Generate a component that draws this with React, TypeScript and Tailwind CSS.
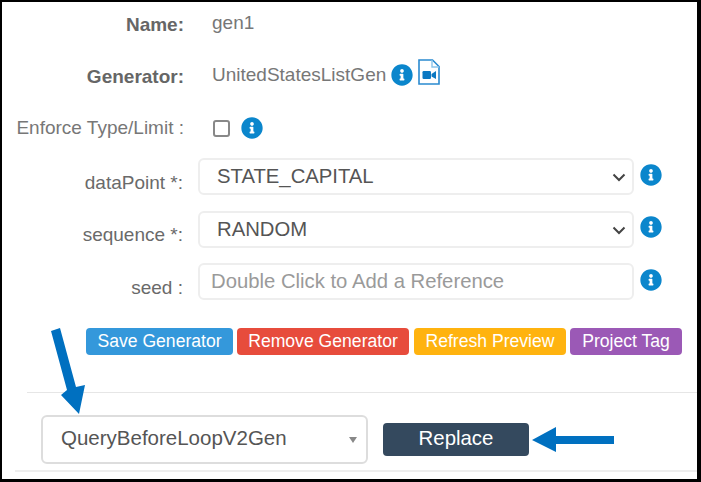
import { FaInfoCircle } from "react-icons/fa";

function Info({ className = "" }: { className?: string }) {
  return <FaInfoCircle className={"text-[#0b86cc] text-[22px] shrink-0 " + className} />;
}

function Chevron() {
  return (
    <svg width="14" height="9" viewBox="0 0 14 9" className="absolute right-[6px] top-[13px]">
      <path d="M1.5 1.5 L7 7 L12.5 1.5" fill="none" stroke="#444" strokeWidth="2" />
    </svg>
  );
}

function FileVideo() {
  return (
    <svg width="22" height="26" viewBox="0 0 22 26" className="ml-[5px] -mt-[8px] shrink-0">
      <path d="M1 1 H14.5 L21 7.5 V25 H1 Z" fill="#fff" stroke="#2a8ad0" strokeWidth="1.6" />
      <path d="M14 1 V8 H21" fill="none" stroke="#8cc4ea" strokeWidth="1.4" />
      <rect x="4.5" y="12" width="8.5" height="8" rx="1.2" fill="#0b78c2" />
      <path d="M13.5 15 L18 12 V20 L13.5 17.5 Z" fill="#0b78c2" />
    </svg>
  );
}

function SelectRow({ label, value, placeholder }: { label: string; value: string; placeholder?: boolean }) {
  return (
    <div className="flex items-center h-[37px]">
      <div className="w-[181px] text-right text-[#6a6a6a] text-[19px] leading-none pt-[11px] shrink-0">{label}</div>
      <div
        className={
          "relative ml-[15px] w-[436px] h-[37px] border-2 border-[#eeeeee] rounded-[6px] bg-white flex items-center text-[20.3px] " +
          (placeholder ? "pl-[11px]" : "pl-[17px]")
        }
      >
        <span className={placeholder ? "text-[#9a9a9a]" : "text-[#555]"}>{value}</span>
        {!placeholder && <Chevron />}
      </div>
      <Info className="ml-[6px] -mt-[4px]" />
    </div>
  );
}

function Btn({ label, className }: { label: string; className: string }) {
  return (
    <div className={"h-[27px] rounded-[4px] flex items-center justify-center text-white text-[17.6px] " + className}>{label}</div>
  );
}

export default function App() {
  return (
    <div
      className="relative w-[701px] h-[482px] bg-white border-t-[2px] border-l-[2px] border-b-[3px] border-r-[4px] border-black overflow-hidden"
      style={{ fontFamily: '"Liberation Sans", Arial, sans-serif' }}
    >
      <div className="flex flex-col">
        <div className="flex items-center h-[24px] mt-[11px]">
          <div className="w-[182px] text-right font-bold text-[#666] text-[19px] shrink-0">Name:</div>
          <div className="ml-[28px] text-[#777] text-[19px] -mt-[3px]">gen1</div>
        </div>
        <div className="flex items-center h-[24px] mt-[27px]">
          <div className="w-[182px] text-right font-bold text-[#666] text-[19px] shrink-0 pt-[2px]">Generator:</div>
          <div className="ml-[28px] text-[#777] text-[19px] -mt-[1px]">UnitedStatesListGen</div>
          <Info className="ml-[5px] -mt-[2px]" />
          <FileVideo />
        </div>
        <div className="flex items-center h-[24px] mt-[28px]">
          <div className="w-[182px] text-right text-[#777] text-[19px] shrink-0">Enforce Type/Limit :</div>
          <div className="ml-[29px] w-[17px] h-[17px] rounded-[3px] border-2 border-[#888] bg-white" />
          <Info className="ml-[11px]" />
        </div>
        <div className="flex flex-col gap-[15.5px] mt-[18px]">
          <SelectRow label="dataPoint *:" value="STATE_CAPITAL" />
          <SelectRow label="sequence *:" value="RANDOM" />
          <SelectRow label="seed :" value="Double Click to Add a Reference" placeholder />
        </div>
        <div className="flex gap-[4px] ml-[84px] mt-[28px]">
          <Btn label="Save Generator" className="w-[147px] bg-[#3498db]" />
          <Btn label="Remove Generator" className="w-[172px] bg-[#e74c3c]" />
          <Btn label="Refresh Preview" className="ml-[1px] w-[152px] bg-[#ffb30f]" />
          <Btn label="Project Tag" className="w-[112px] bg-[#9b59b6]" />
        </div>
        <div className="ml-[25px] mt-[37px] h-px bg-[#e6e6e6]" />
        <div className="flex items-center ml-[39px] mt-[22px]">
          <div className="relative w-[327px] h-[49px] border-2 border-[#dddddd] rounded-[6px] bg-white flex items-center pl-[18px] pb-[2px] text-[#555] text-[20.5px]">
            QueryBeforeLoopV2Gen
            <div className="absolute right-[9px] top-[20px] w-0 h-0 border-l-[4px] border-r-[4px] border-t-[6px] border-l-transparent border-r-transparent border-t-[#888]" />
          </div>
          <div className="ml-[15px] w-[146px] h-[33px] rounded-[4px] bg-[#34495e] text-white text-[20.4px] pb-[2px] flex items-center justify-center">
            Replace
          </div>
        </div>
        <div className="ml-[13px] mt-[6px] h-[2px] bg-[#eeeeee]" />
      </div>

      <svg className="absolute left-[-2px] top-[-2px] pointer-events-none" width="701" height="482" viewBox="0 0 701 482">
        <path d="M51 331 L60 328 L76 387 L85 385 L79 414 L61 395 L67 390 Z" fill="#0070c0" />
        <path d="M532 440 L556 427 L556 436 L614 436 L614 444 L556 444 L556 452 Z" fill="#0070c0" />
      </svg>
    </div>
  );
}
